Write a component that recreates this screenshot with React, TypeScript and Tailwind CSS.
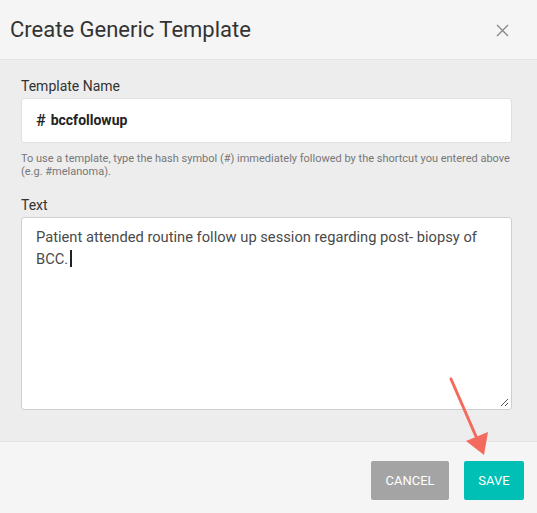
import React from "react";

export default function App() {
  return (
    <div className="relative w-[537px] h-[513px] overflow-hidden bg-[#f5f5f5] flex flex-col" style={{ fontFamily: "Roboto, 'Liberation Sans', sans-serif" }}>
      <div className="h-[60px] shrink-0 flex items-center justify-between pl-[10px] pr-[28px] border-b border-[#e3e3e3] bg-[#f5f5f5]">
        <h1 className="text-[22px] text-[#333] leading-none">Create Generic Template</h1>
        <svg width="13" height="13" viewBox="0 0 13 13" className="mt-[1px]">
          <path d="M1 1L12 12M12 1L1 12" stroke="#8a8a8a" strokeWidth="1.4" />
        </svg>
      </div>
      <div className="h-[382px] shrink-0 bg-[#ededed] px-[21px] pt-[17px] border-b border-[#e3e3e3] flex flex-col">
        <label className="text-[14px] text-[#333] leading-[18px]">Template Name</label>
        <div className="mt-[3px] h-[45px] w-[491px] bg-white border border-[#e0e0e0] rounded-[3px] flex items-center pl-[14px]">
          <span className="text-[16px] text-[#222] font-medium">#</span>
          <span className="ml-[5px] text-[14px] text-[#222] font-bold">bccfollowup</span>
        </div>
        <p className="mt-[9px] text-[11px] leading-[13px] text-[#777] pr-[4px]">
          To use a template, type the hash symbol (#) immediately followed by the shortcut you entered above (e.g. #melanoma).
        </p>
        <label className="mt-[18px] text-[14px] text-[#333] leading-[18px]">Text</label>
        <div className="relative mt-[3px] h-[193px] w-[491px] bg-white border border-[#cfcfcf] rounded-[3px] px-[14px] pt-[8px]">
          <p className="text-[14.7px] leading-[22px] text-[#4a4a4a]">
            Patient attended routine follow up session regarding post- biopsy of BCC.<span className="inline-block w-[1.5px] h-[17px] bg-[#222] align-[-3px] ml-[2px]"></span>
          </p>
          <svg width="9" height="9" viewBox="0 0 9 9" className="absolute right-[2px] bottom-[2px]">
            <path d="M8 1L1 8M8 5L5 8" stroke="#555" strokeWidth="1" />
          </svg>
        </div>
      </div>
      <div className="flex-1 flex items-start justify-end pt-[19px] pr-[13px] gap-[15px]">
        <button className="w-[78px] h-[39px] bg-[#a4a4a4] text-white text-[13px] rounded-[2px] uppercase">Cancel</button>
        <button className="w-[60px] h-[39px] bg-[#00bfb5] text-white text-[13px] rounded-[2px] uppercase">Save</button>
      </div>
      <svg className="absolute left-0 top-0 pointer-events-none" width="537" height="513">
        <line x1="451" y1="379" x2="478" y2="441" stroke="#f26b5e" strokeWidth="3" strokeLinecap="round" />
        <polygon points="466,441 488,432 484,455" fill="#f26b5e" />
      </svg>
    </div>
  );
}
